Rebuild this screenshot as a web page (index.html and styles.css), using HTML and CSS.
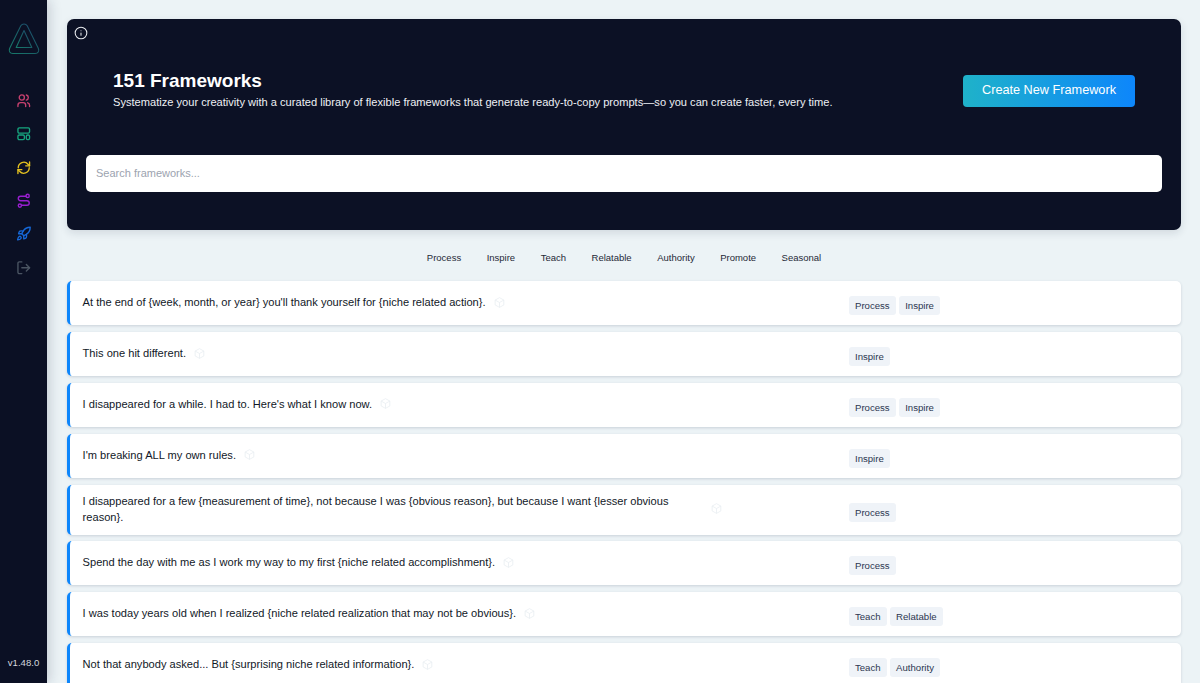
FILE: index.html
```html
<!DOCTYPE html>
<html lang="en">
<head>
<meta charset="utf-8">
<title>Frameworks</title>
<link rel="stylesheet" href="styles.css">
</head>
<body>
<div class="app">
  <aside class="sidebar">
    <svg class="logo" viewBox="0 0 32 32" fill="none" stroke-linejoin="round">
      <defs><linearGradient id="lg" x1="0" y1="1" x2="1" y2="0"><stop offset="0" stop-color="#17796a"/><stop offset=".6" stop-color="#1a5a66"/><stop offset="1" stop-color="#1d4470"/></linearGradient></defs>
      <path d="M12.800 2.800 C14.300 .4 17.700 .4 19.200 2.800 L30.400 25.500 C31.500 28.300 30 30.500 27.200 30.500 L4.800 30.500 C2 30.500 .5 28.300 1.600 25.500 Z" stroke="url(#lg)" stroke-width="1.100"/>
      <path d="M16 7.500 L23.800 24.500 L8.200 24.500 Z" stroke="url(#lg)" stroke-width="1.100"/>
    </svg>
    <nav class="nav">
      <svg class="ico pink" viewBox="0 0 24 24"><circle cx="9" cy="7" r="4"/><path d="M3 21v-2a4 4 0 0 1 4-4h4a4 4 0 0 1 4 4v2"/><path d="M16 3.100a4 4 0 0 1 0 7.800"/><path d="M21 21v-2a4 4 0 0 0-3-3.850"/></svg>
      <svg class="ico green" viewBox="0 0 24 24"><rect x="3" y="3" width="18" height="8" rx="2"/><rect x="3" y="14" width="10" height="7" rx="2"/><rect x="16" y="14" width="5" height="7" rx="2"/></svg>
      <svg class="ico yellow" viewBox="0 0 24 24"><path d="M3.500 12a8.500 8.500 0 0 1 15-5.500L21 9"/><path d="M21 3v6h-6"/><path d="M20.500 12a8.500 8.500 0 0 1-15 5.500L3 15"/><path d="M3 21v-6h6"/></svg>
      <svg class="ico purple" viewBox="0 0 24 24"><circle cx="18" cy="4.500" r="2.500"/><circle cx="6" cy="19.500" r="2.500"/><path d="M15.500 5H7a3.500 3.500 0 0 0 0 7h10a3.500 3.500 0 0 1 0 7H8.500"/></svg>
      <svg class="ico blue" viewBox="0 0 24 24"><path d="M4.500 16.500c-1.500 1.300-2 5-2 5s3.700-.5 5-2c.7-.8.700-2.100-.1-2.900a2.200 2.200 0 0 0-2.900-.1z"/><path d="M12 15l-3-3a22 22 0 0 1 2-4A12.900 12.900 0 0 1 22 2c0 2.700-.8 7.500-6 11a22 22 0 0 1-4 2z"/><path d="M9 12H4s.5-3 2-4c1.600-1.100 5 0 5 0"/><path d="M12 15v5s3-.5 4-2c1.100-1.600 0-5 0-5"/></svg>
      <svg class="ico gray" viewBox="0 0 24 24"><path d="M9 21H5a2 2 0 0 1-2-2V5a2 2 0 0 1 2-2h4"/><path d="M16 17l5-5-5-5"/><path d="M21 12H9"/></svg>
    </nav>
    <div class="version">v1.48.0</div>
  </aside>
  <main class="main">
    <section class="hero">
      <svg class="info" viewBox="0 0 24 24"><circle cx="12" cy="12" r="10"/><path d="M12 16v-4"/><path d="M12 8h.01"/></svg>
      <div class="hero-top">
        <div>
          <h1>151 Frameworks</h1>
          <p>Systematize your creativity with a curated library of flexible frameworks that generate ready-to-copy prompts—so you can create faster, every time.</p>
        </div>
        <button class="create">Create New Framework</button>
      </div>
      <div class="search">Search frameworks...</div>
    </section>
    <div class="filters">
      <span>Process</span><span>Inspire</span><span>Teach</span><span>Relatable</span><span>Authority</span><span>Promote</span><span>Seasonal</span>
    </div>
    <div class="list">
      <article class="row"><div class="copy"><span class="txt">At the end of {week, month, or year} you'll thank yourself for {niche related action}.</span><svg class="box" viewBox="0 0 24 24"><path d="M12 3l8 4.500v9L12 21l-8-4.500v-9z"/><path d="M4 7.500l8 4.500 8-4.500M12 12v9"/></svg></div><div class="tags"><span>Process</span><span>Inspire</span></div></article>
      <article class="row"><div class="copy"><span class="txt">This one hit different.</span><svg class="box" viewBox="0 0 24 24"><path d="M12 3l8 4.500v9L12 21l-8-4.500v-9z"/><path d="M4 7.500l8 4.500 8-4.500M12 12v9"/></svg></div><div class="tags"><span>Inspire</span></div></article>
      <article class="row"><div class="copy"><span class="txt">I disappeared for a while. I had to. Here's what I know now.</span><svg class="box" viewBox="0 0 24 24"><path d="M12 3l8 4.500v9L12 21l-8-4.500v-9z"/><path d="M4 7.500l8 4.500 8-4.500M12 12v9"/></svg></div><div class="tags"><span>Process</span><span>Inspire</span></div></article>
      <article class="row"><div class="copy"><span class="txt">I'm breaking ALL my own rules.</span><svg class="box" viewBox="0 0 24 24"><path d="M12 3l8 4.500v9L12 21l-8-4.500v-9z"/><path d="M4 7.500l8 4.500 8-4.500M12 12v9"/></svg></div><div class="tags"><span>Inspire</span></div></article>
      <article class="row"><div class="copy"><span class="txt wrap">I disappeared for a few {measurement of time}, not because I was {obvious reason}, but because I want {lesser obvious reason}.</span><svg class="box" viewBox="0 0 24 24"><path d="M12 3l8 4.500v9L12 21l-8-4.500v-9z"/><path d="M4 7.500l8 4.500 8-4.500M12 12v9"/></svg></div><div class="tags"><span>Process</span></div></article>
      <article class="row"><div class="copy"><span class="txt">Spend the day with me as I work my way to my first {niche related accomplishment}.</span><svg class="box" viewBox="0 0 24 24"><path d="M12 3l8 4.500v9L12 21l-8-4.500v-9z"/><path d="M4 7.500l8 4.500 8-4.500M12 12v9"/></svg></div><div class="tags"><span>Process</span></div></article>
      <article class="row"><div class="copy"><span class="txt">I was today years old when I realized {niche related realization that may not be obvious}.</span><svg class="box" viewBox="0 0 24 24"><path d="M12 3l8 4.500v9L12 21l-8-4.500v-9z"/><path d="M4 7.500l8 4.500 8-4.500M12 12v9"/></svg></div><div class="tags"><span>Teach</span><span>Relatable</span></div></article>
      <article class="row"><div class="copy"><span class="txt">Not that anybody asked... But {surprising niche related information}.</span><svg class="box" viewBox="0 0 24 24"><path d="M12 3l8 4.500v9L12 21l-8-4.500v-9z"/><path d="M4 7.500l8 4.500 8-4.500M12 12v9"/></svg></div><div class="tags"><span>Teach</span><span>Authority</span></div></article>
    </div>
  </main>
</div>
</body>
</html>
```

FILE: styles.css
```css
* { box-sizing: border-box; }
html, body { margin: 0; height: 683px; overflow: hidden; }
body { font-family: "Liberation Sans", Arial, sans-serif; background: #ecf3f6; color: #111827; }
.app { display: flex; height: 683px; overflow: hidden; }
.sidebar { flex: 0 0 47px; background: #0b1024; display: flex; flex-direction: column; align-items: center; padding-top: 23px; box-shadow: 2px 0 12px rgba(20,30,60,.2); z-index: 1; }
.logo { width: 32px; height: 32px; display: block; }
.nav { display: flex; flex-direction: column; gap: 17.900px; margin-top: 37.800px; align-items: center; }
.ico { width: 15.500px; height: 15.500px; fill: none; stroke-width: 2.100; stroke-linecap: round; stroke-linejoin: round; display: block; }
.pink { stroke: #c7406f; }
.green { stroke: #17a57f; }
.yellow { stroke: #e3c020; }
.purple { stroke: #9a1fd0; }
.blue { stroke: #1668d8; }
.gray { stroke: #4b5563; }
.version { margin-top: auto; margin-bottom: 14px; font-size: 9.600px; line-height: 12px; color: #d3d7df; }
.main { flex: 1; min-width: 0; padding: 19px 19px 0 20px; }
.hero { position: relative; background: #0c1125; border-radius: 7px; height: 211px; padding: 51px 19px 0; box-shadow: 0 3px 8px rgba(20,30,60,.12); }
.info { position: absolute; left: 7px; top: 7px; width: 14px; height: 14px; fill: none; stroke: #e8eaee; stroke-width: 1.800; stroke-linecap: round; stroke-linejoin: round; }
.hero-top { display: flex; justify-content: space-between; align-items: flex-start; padding: 0 27px; height: 85px; }
h1 { margin: 0; font-size: 19px; line-height: 22px; font-weight: 700; color: #fff; }
.hero p { margin: 3px 0 0; font-size: 11.100px; line-height: 14px; color: #eef0f4; }
.create { margin-top: 4.500px; width: 172px; height: 32px; border: 0; border-radius: 4px; background: linear-gradient(90deg, #1fb2c9, #0d86fb); color: #fff; font: 12.700px/30px "Liberation Sans", Arial, sans-serif; padding: 0 0 1.500px; }
.search { height: 37px; background: #fff; border-radius: 5px; padding: 0 10px; font-size: 11px; line-height: 36px; color: #9ca3af; }
.filters { display: flex; justify-content: center; gap: 25.500px; height: 51px; padding-top: 21.500px; font-size: 9.500px; line-height: 12px; color: #1f2937; }
.list { display: flex; flex-direction: column; gap: 6.600px; }
.row { display: grid; grid-template-columns: 766px 1fr; align-items: center; min-height: 44.300px; padding: 8px 0 10px 12.600px; background: #fff; border-left: 3px solid #0d86fb; border-radius: 5px; box-shadow: 0 1px 3px rgba(20,30,60,.16); }
.copy { display: flex; align-items: center; gap: 7px; font-size: 11.100px; line-height: 16px; color: #111827; }
.txt { display: block; }
.wrap { width: 620px; flex: none; }
.box { width: 13px; height: 13px; flex: none; fill: none; stroke: #e9eef2; stroke-width: 1.500; }
.tags { display: flex; gap: 3.500px; margin-top: 7px; padding-left: .4px; }
.tags span { padding: 0 6px; height: 19px; line-height: 19px; background: #eff3f8; border-radius: 3px; font-size: 9.600px; color: #2c3650; }
```
